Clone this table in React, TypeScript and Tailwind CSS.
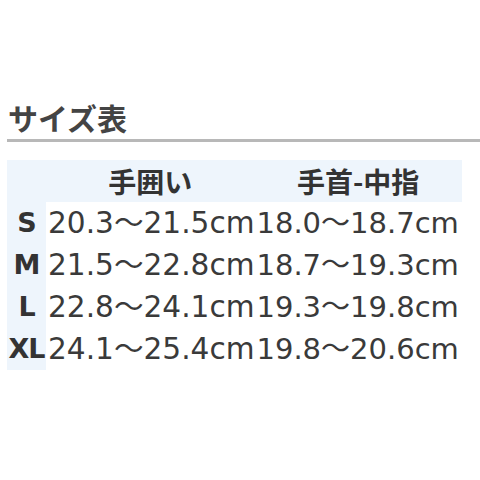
const ROWS = [
  { size: 'S', wrist: '20.3～21.5cm', hand: '18.0～18.7cm' },
  { size: 'M', wrist: '21.5～22.8cm', hand: '18.7～19.3cm' },
  { size: 'L', wrist: '22.8～24.1cm', hand: '19.3～19.8cm' },
  { size: 'XL', wrist: '24.1～25.4cm', hand: '19.8～20.6cm' },
];

export default function App() {
  return (
    <div className="w-[480px] h-[480px] bg-white pl-[7px] pt-[99px] overflow-hidden font-['DejaVu_Sans','Noto_Sans_CJK_JP',sans-serif] text-[#333]">
      <h2 className="font-['Noto_Sans_CJK_JP',sans-serif] text-[30px] font-bold leading-[37px] text-[#444] pl-[1px] pb-[3px] border-b-[3px] border-[#b8b8b8]">
        サイズ表
      </h2>

      <table className="mt-[18px] border-collapse">
        <thead>
          <tr className="bg-[#eef5fc] h-[42px]">
            <th className="w-[39px] p-0" />
            <th className="font-['Noto_Sans_CJK_JP',sans-serif] text-[28px] leading-[42px] font-bold text-[#333] text-center p-0">手囲い</th>
            <th className="font-['Noto_Sans_CJK_JP',sans-serif] text-[28px] leading-[42px] font-bold text-[#333] text-center p-0">手首-中指</th>
          </tr>
        </thead>
        <tbody>
          {ROWS.map((r) => (
            <tr key={r.size} className="h-[42px]">
              <th className="bg-[#eef5fc] text-[27px] leading-[42px] font-bold text-[#333] text-center p-0 whitespace-nowrap tracking-[-1px]">{r.size}</th>
              <td className="text-[29.6px] leading-[42px] text-[#3a3a3a] pl-[2px] pr-0 py-0 whitespace-nowrap">{r.wrist}</td>
              <td className="text-[29px] leading-[42px] text-[#3a3a3a] pl-[2px] pr-[3px] py-0 whitespace-nowrap">{r.hand}</td>
            </tr>
          ))}
        </tbody>
      </table>
    </div>
  );
}
